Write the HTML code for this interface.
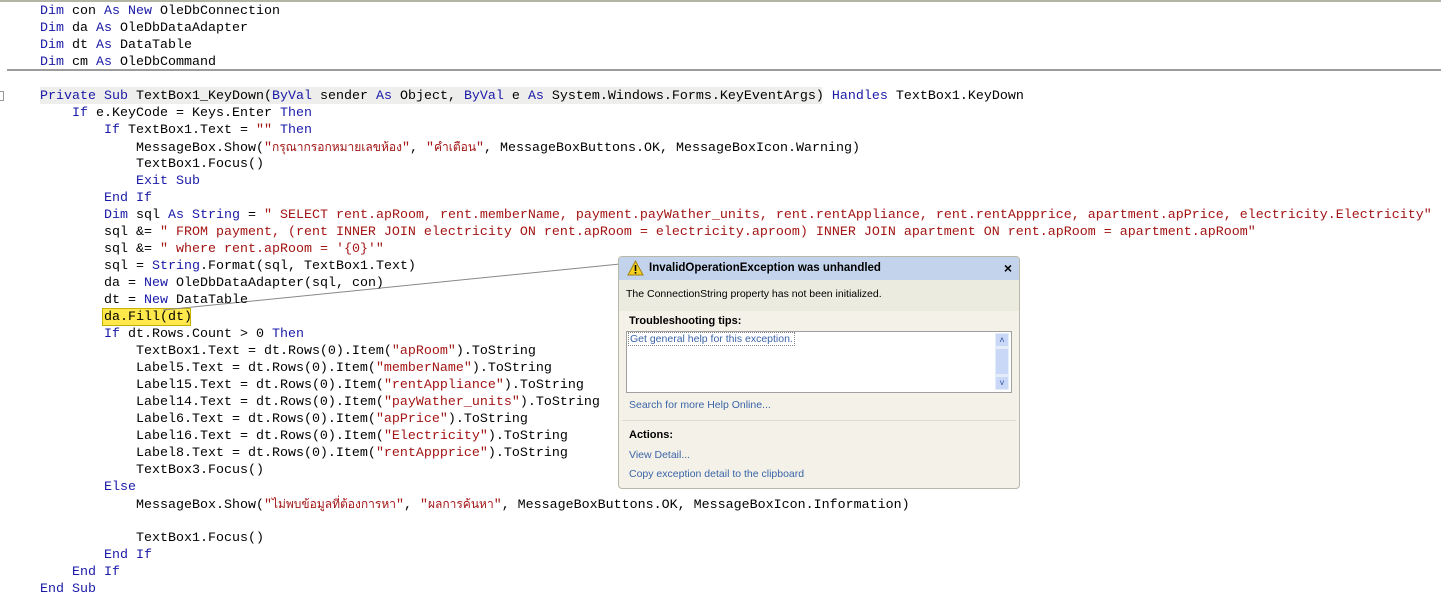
<!DOCTYPE html>
<html><head><meta charset="utf-8"><style>
body{margin:0;width:1441px;height:597px;background:#fff;position:relative;overflow:hidden;font-family:"Liberation Mono",monospace;font-size:13.33px;color:#000}
.l{position:absolute;left:40px;height:17px;line-height:17px;white-space:pre;margin-top:1px}
.k{color:#1a1aa8}.s{color:#a31515}
.th{font-family:"Liberation Sans",sans-serif;font-size:12px}
#dlg{position:absolute;left:618px;top:256px;width:400px;height:231px;border:1px solid #b8b8a8;border-radius:4px;background:#f4f2e8;font-family:"Liberation Sans",sans-serif;font-size:10.5px;overflow:hidden}
.lk{color:#3a64a8}
</style></head><body>
<div style="position:absolute;left:0;top:0;width:1441px;height:2px;background:#b4b4a4"></div>
<div style="position:absolute;left:7px;top:69px;width:1434px;height:2px;background:#9c9c9c"></div>
<div style="position:absolute;left:40px;top:87px;width:782px;height:17px;background:#eeeeec"></div>
<div style="position:absolute;left:0;top:91px;width:3px;height:8px;border:1px solid #999;border-left:none"></div>
<div style="position:absolute;left:102px;top:308px;width:87px;height:16px;background:#ffe84c;border:1px solid #c8b000"></div>
<svg style="position:absolute;left:0;top:0" width="1441" height="597"><line x1="163" y1="310" x2="620" y2="264" stroke="#888" stroke-width="1"/></svg>
<div class="l" style="top:2px"><span class="k">Dim</span> con <span class="k">As New</span> OleDbConnection</div>
<div class="l" style="top:19px"><span class="k">Dim</span> da <span class="k">As</span> OleDbDataAdapter</div>
<div class="l" style="top:36px"><span class="k">Dim</span> dt <span class="k">As</span> DataTable</div>
<div class="l" style="top:53px"><span class="k">Dim</span> cm <span class="k">As</span> OleDbCommand</div>
<div class="l" style="top:87px"><span class="k">Private Sub</span> TextBox1_KeyDown(<span class="k">ByVal</span> sender <span class="k">As</span> Object, <span class="k">ByVal</span> e <span class="k">As</span> System.Windows.Forms.KeyEventArgs) <span class="k">Handles</span> TextBox1.KeyDown</div>
<div class="l" style="top:104px">    <span class="k">If</span> e.KeyCode = Keys.Enter <span class="k">Then</span></div>
<div class="l" style="top:121px">        <span class="k">If</span> TextBox1.Text = <span class="s">""</span> <span class="k">Then</span></div>
<div class="l" style="top:138px">            MessageBox.Show(<span class="s">"<span class="th">กรุณากรอกหมายเลขห้อง</span>"</span>, <span class="s">"<span class="th">คำเตือน</span>"</span>, MessageBoxButtons.OK, MessageBoxIcon.Warning)</div>
<div class="l" style="top:155px">            TextBox1.Focus()</div>
<div class="l" style="top:172px">            <span class="k">Exit Sub</span></div>
<div class="l" style="top:189px">        <span class="k">End If</span></div>
<div class="l" style="top:206px">        <span class="k">Dim</span> sql <span class="k">As String</span> = <span class="s">" SELECT rent.apRoom, rent.memberName, payment.payWather_units, rent.rentAppliance, rent.rentAppprice, apartment.apPrice, electricity.Electricity"</span></div>
<div class="l" style="top:223px">        sql &amp;= <span class="s">" FROM payment, (rent INNER JOIN electricity ON rent.apRoom = electricity.aproom) INNER JOIN apartment ON rent.apRoom = apartment.apRoom"</span></div>
<div class="l" style="top:240px">        sql &amp;= <span class="s">" where rent.apRoom = '{0}'"</span></div>
<div class="l" style="top:257px">        sql = <span class="k">String</span>.Format(sql, TextBox1.Text)</div>
<div class="l" style="top:274px">        da = <span class="k">New</span> OleDbDataAdapter(sql, con)</div>
<div class="l" style="top:291px">        dt = <span class="k">New</span> DataTable</div>
<div class="l" style="top:308px">        da.Fill(dt)</div>
<div class="l" style="top:325px">        <span class="k">If</span> dt.Rows.Count &gt; 0 <span class="k">Then</span></div>
<div class="l" style="top:342px">            TextBox1.Text = dt.Rows(0).Item(<span class="s">"apRoom"</span>).ToString</div>
<div class="l" style="top:359px">            Label5.Text = dt.Rows(0).Item(<span class="s">"memberName"</span>).ToString</div>
<div class="l" style="top:376px">            Label15.Text = dt.Rows(0).Item(<span class="s">"rentAppliance"</span>).ToString</div>
<div class="l" style="top:393px">            Label14.Text = dt.Rows(0).Item(<span class="s">"payWather_units"</span>).ToString</div>
<div class="l" style="top:410px">            Label6.Text = dt.Rows(0).Item(<span class="s">"apPrice"</span>).ToString</div>
<div class="l" style="top:427px">            Label16.Text = dt.Rows(0).Item(<span class="s">"Electricity"</span>).ToString</div>
<div class="l" style="top:444px">            Label8.Text = dt.Rows(0).Item(<span class="s">"rentAppprice"</span>).ToString</div>
<div class="l" style="top:461px">            TextBox3.Focus()</div>
<div class="l" style="top:478px">        <span class="k">Else</span></div>
<div class="l" style="top:495px">            MessageBox.Show(<span class="s">"<span class="th">ไม่พบข้อมูลที่ต้องการหา</span>"</span>, <span class="s">"<span class="th">ผลการค้นหา</span>"</span>, MessageBoxButtons.OK, MessageBoxIcon.Information)</div>
<div class="l" style="top:529px">            TextBox1.Focus()</div>
<div class="l" style="top:546px">        <span class="k">End If</span></div>
<div class="l" style="top:563px">    <span class="k">End If</span></div>
<div class="l" style="top:580px"><span class="k">End Sub</span></div>

<div id="dlg">
 <div style="position:absolute;left:0;top:0;width:400px;height:23px;background:#c4d3ec"></div>
 <svg style="position:absolute;left:8px;top:3px" width="17" height="16"><path d="M8.5 1 L16 15 L1 15 Z" fill="#f5d020" stroke="#a08010"/><rect x="7.7" y="5" width="1.6" height="6" fill="#000"/><rect x="7.7" y="12" width="1.6" height="1.6" fill="#000"/></svg>
 <div style="position:absolute;left:30px;top:5px;font-weight:bold;font-size:11.5px">InvalidOperationException was unhandled</div>
 <div style="position:absolute;right:7px;top:3px;font-weight:bold;font-size:14px">×</div>
 <div style="position:absolute;left:0;top:23px;width:400px;height:31px;background:#ecebe0"></div>
 <div style="position:absolute;left:7px;top:31px">The ConnectionString property has not been initialized.</div>
 <div style="position:absolute;left:10px;top:58px;font-weight:bold;font-size:11px">Troubleshooting tips:</div>
 <div style="position:absolute;left:7px;top:74px;width:384px;height:60px;background:#fff;border:1px solid #a0a0a0"></div>
 <div style="position:absolute;left:9px;top:75px;border:1px dotted #888;padding:0 1px" class="lk">Get general help for this exception.</div>
 <div style="position:absolute;left:376px;top:76px;width:14px;height:57px;background:#e4ecfa"></div>
 <div style="position:absolute;left:377px;top:77px;width:12px;height:12px;background:#c8d8f6;color:#3050a0;font-size:9px;text-align:center;line-height:12px">˄</div>
 <div style="position:absolute;left:377px;top:92px;width:12px;height:25px;background:#c8d8f6"></div>
 <div style="position:absolute;left:377px;top:120px;width:12px;height:12px;background:#c8d8f6;color:#3050a0;font-size:9px;text-align:center;line-height:12px">˅</div>
 <div style="position:absolute;left:10px;top:142px" class="lk">Search for more Help Online...</div>
 <div style="position:absolute;left:3px;top:163px;width:394px;height:1px;background:#e0ddd0"></div>
 <div style="position:absolute;left:10px;top:172px;font-weight:bold;font-size:11px">Actions:</div>
 <div style="position:absolute;left:10px;top:192px" class="lk">View Detail...</div>
 <div style="position:absolute;left:10px;top:211px" class="lk">Copy exception detail to the clipboard</div>
</div>
</body></html>
